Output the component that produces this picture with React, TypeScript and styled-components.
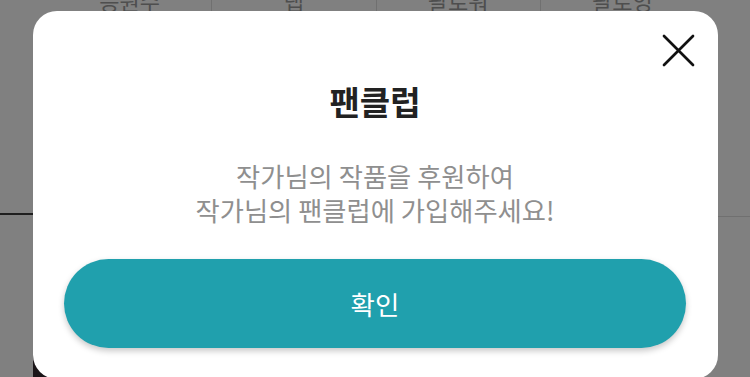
import React from "react";
import styled, { createGlobalStyle } from "styled-components";

const GlobalStyle = createGlobalStyle`
  html, body {
    margin: 0;
    padding: 0;
    background: #808080;
    overflow: hidden;
  }
  body {
    font-family: "Noto Sans CJK KR", "Noto Sans", sans-serif;
  }
  * { box-sizing: border-box; }
`;

const Page = styled.div`
  position: relative;
  width: 750px;
  height: 377px;
  overflow: hidden;
  display: flex;
  flex-direction: column;
  & > * { flex-shrink: 0; }
`;

const TabsRow = styled.div`
  display: flex;
  padding: 0 46px 0 48px;
  height: 30px;
  margin-top: -10px;
`;

const Tab = styled.div<{ $divider?: boolean }>`
  flex: 1;
  display: flex;
  justify-content: center;
  align-items: flex-start;
  font-size: 22px;
  line-height: 21px;
  color: #4e4e4e;
  border-right: ${(p) => (p.$divider ? "1px solid #707070" : "none")};
`;

const Spacer = styled.div`
  height: 193px;
`;

const SectionLine = styled.div`
  display: flex;
  align-items: flex-start;
  height: 4px;
`;

const LeftRule = styled.div`
  width: 40px;
  height: 2px;
  background: #1f1f1f;
`;

const RightRule = styled.div`
  flex: 1;
  height: 1px;
  margin-top: 3px;
  background: #707070;
`;

const DarkBlock = styled.div`
  margin: 138px 0 0 33px;
  width: 30px;
  height: 22px;
  background: #1a1518;
`;

const Modal = styled.div`
  position: absolute;
  left: 33px;
  top: 11px;
  width: 685px;
  height: 368px;
  background: #ffffff;
  border-radius: 24px;
  display: flex;
  flex-direction: column;
  align-items: center;
  padding: 70px 32px 0 31px;
`;

const CloseButton = styled.button`
  position: absolute;
  top: 23px;
  right: 23px;
  width: 33px;
  height: 33px;
  padding: 0;
  border: none;
  background: transparent;
  display: flex;
  align-items: center;
  justify-content: center;
`;

const Title = styled.h2`
  margin: 0;
  font-size: 33px;
  line-height: 40px;
  font-weight: 700;
  color: #222222;
  letter-spacing: 0;
`;

const Message = styled.p`
  margin: 38px 0 0;
  font-size: 26.3px;
  line-height: 34px;
  font-weight: 400;
  color: #8f8f8f;
  text-align: center;
`;

const ConfirmButton = styled.button`
  margin-top: 32px;
  width: 100%;
  height: 89px;
  border: none;
  border-radius: 45px;
  background: #20a0ad;
  box-shadow: 0 3px 6px rgba(0, 0, 0, 0.22);
  color: #ffffff;
  font-family: "Noto Sans CJK KR", "Noto Sans", sans-serif;
  font-size: 26.5px;
  font-weight: 400;
  display: flex;
  align-items: center;
  justify-content: center;
`;

const tabs = ["응원수", "랩", "팔로워", "팔로잉"];

export default function App() {
  return (
    <>
      <GlobalStyle />
      <Page>
        <TabsRow>
          {tabs.map((t, i) => (
            <Tab key={t} $divider={i < tabs.length - 1}>
              {t}
            </Tab>
          ))}
        </TabsRow>
        <Spacer />
        <SectionLine>
          <LeftRule />
          <RightRule />
        </SectionLine>
        <DarkBlock />
        <Modal>
          <CloseButton aria-label="닫기">
            <svg width="33" height="33" viewBox="0 0 33 33">
              <path
                d="M2 2 L31 31 M31 2 L2 31"
                stroke="#111"
                strokeWidth="2.7"
                strokeLinecap="round"
                fill="none"
              />
            </svg>
          </CloseButton>
          <Title>팬클럽</Title>
          <Message>
            작가님의 작품을 후원하여
            <br />
            작가님의 팬클럽에 가입해주세요!
          </Message>
          <ConfirmButton>확인</ConfirmButton>
        </Modal>
      </Page>
    </>
  );
}
